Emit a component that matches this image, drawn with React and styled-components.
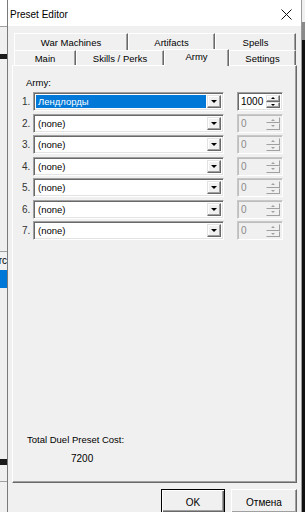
import React from 'react'
import styled, { createGlobalStyle } from 'styled-components'

const Global = createGlobalStyle`
  html, body {
    margin: 0;
    padding: 0;
    overflow: hidden;
    background: #f0f0f0;
  }
  * {
    box-sizing: border-box;
  }
`

const Screen = styled.div`
  display: flex;
  width: 305px;
  height: 512px;
  overflow: hidden;
  font-family: 'Liberation Sans', Arial, sans-serif;
  font-size: 9.5px;
  color: #000;
`

const BackLeft = styled.div`
  width: 7px;
  flex: none;
  display: flex;
  flex-direction: column;
  background: #f0f0f0;
  overflow: hidden;
`
const BackBand = styled.div`
  height: ${(p) => p.h}px;
  flex: none;
  background: ${(p) => p.bg || 'transparent'};
  border-bottom: ${(p) => (p.line ? '1px solid #a0a0a0' : 'none')};
  color: #000;
  font-size: 10px;
  line-height: ${(p) => p.h}px;
  white-space: nowrap;
  direction: rtl;
`
const BackRight = styled.div`
  width: 3px;
  flex: none;
  display: flex;
  flex-direction: column;
`
const RightBand = styled.div`
  height: ${(p) => p.h}px;
  flex: ${(p) => (p.grow ? 1 : 'none')};
  background: ${(p) => p.bg};
`

const Dialog = styled.div`
  width: 295px;
  flex: none;
  display: flex;
  flex-direction: column;
  border-left: 1px solid #7a7a7a;
  border-right: 1px solid #9a9a9a;
  background: #f0f0f0;
`
const TitleBar = styled.div`
  height: 26px;
  flex: none;
  display: flex;
  align-items: center;
  justify-content: space-between;
  background: #fff;
  padding: 2px 9px 0 2px;
  font-size: 10px;
`
const Body = styled.div`
  flex: 1;
  display: flex;
  flex-direction: column;
  padding: 7px 4px 0 4px;
`
const TabRow = styled.div`
  display: flex;
  height: ${(p) => p.h}px;
  padding-left: 2px;
  align-items: flex-end;
`
const Tab = styled.div`
  width: ${(p) => p.w}px;
  height: ${(p) => (p.active ? 17 : p.h)}px;
  flex: none;
  display: flex;
  align-items: center;
  justify-content: center;
  padding-bottom: ${(p) => (p.active ? 3 : 0)}px;
  background: #f0f0f0;
  border-top: 1px solid #fff;
  border-left: 1px solid #fff;
  border-right: 1px solid #696969;
  box-shadow: inset -1px 0 0 #a0a0a0;
  position: relative;
  z-index: ${(p) => (p.active ? 2 : 0)};
  margin-bottom: ${(p) => (p.active ? -1 : 0)}px;
`
const Panel = styled.div`
  height: 418px;
  flex: none;
  display: flex;
  flex-direction: column;
  border: 1px solid;
  border-color: #fff #696969 #696969 #fff;
  box-shadow: inset -1px -1px 0 #a0a0a0;
  padding: 10px 0 0 9px;
`
const SectionLabel = styled.div`
  height: 14px;
  line-height: 14px;
  margin: 0 0 2px 4px;
`
const Rows = styled.div`
  display: flex;
  flex-direction: column;
  gap: 2.5px;
`
const Row = styled.div`
  display: flex;
  align-items: center;
  height: 19px;
`
const Num = styled.div`
  width: 11px;
  flex: none;
  color: #333;
  font-size: 10px;
`
const Sunken = styled.div`
  display: flex;
  height: 19px;
  flex: none;
  border: 1px solid;
  border-color: #a0a0a0 #fff #fff #a0a0a0;
  box-shadow: inset 1px 1px 0 #696969, inset -1px -1px 0 #e3e3e3;
  background: #fff;
  padding: 2px;
`
const Combo = styled(Sunken)`
  width: 191px;
`
const ComboText = styled.div`
  flex: 1;
  padding-left: 2px;
  line-height: 13px;
  background: ${(p) => (p.selected ? '#0078d7' : 'transparent')};
  color: ${(p) => (p.selected ? '#fff' : '#000')};
  margin-right: 1px;
`
const Raised = styled.div`
  background: #f0f0f0;
  border: 1px solid;
  border-color: #e3e3e3 #696969 #696969 #e3e3e3;
  box-shadow: inset -1px -1px 0 #a0a0a0, inset 1px 1px 0 #fff;
  display: flex;
  align-items: center;
  justify-content: center;
`
const DropButton = styled(Raised)`
  width: 14px;
`
const Arrow = styled.div`
  width: 0;
  height: 0;
  border-left: ${(p) => p.s}px solid transparent;
  border-right: ${(p) => p.s}px solid transparent;
  ${(p) => (p.up ? 'border-bottom' : 'border-top')}: ${(p) => p.s}px solid
    ${(p) => (p.disabled ? '#a0a0a0' : '#000')};
`
const Spinner = styled(Sunken)`
  width: 46px;
  margin-left: 13px;
  border-color: ${(p) => (p.disabled ? '#c8c8c8 #fff #fff #c8c8c8' : '#a0a0a0 #fff #fff #a0a0a0')};
  box-shadow: ${(p) =>
    p.disabled ? 'inset 1px 1px 0 #bdbdbd' : 'inset 1px 1px 0 #696969, inset -1px -1px 0 #e3e3e3'};
  background: ${(p) => (p.disabled ? '#f0f0f0' : '#fff')};
`
const SpinText = styled.div`
  flex: 1;
  line-height: 13px;
  padding-left: 1px;
  color: ${(p) => (p.disabled ? '#8a8a8a' : '#000')};
  font-size: 10px;
`
const SpinButtons = styled.div`
  width: 14px;
  display: flex;
  flex-direction: column;
`
const SpinHalf = styled(Raised)`
  flex: 1;
  ${(p) => (p.disabled ? 'border-color: #f0f0f0 #a0a0a0 #a0a0a0 #f0f0f0; box-shadow: none;' : '')}
`
const Spacer = styled.div`
  flex: 1;
`
const Total = styled.div`
  padding-left: 5px;
  line-height: 14px;
`
const TotalValue = styled.div`
  padding-left: 49px;
  margin-top: 5px;
  margin-bottom: 16px;
  line-height: 14px;
  font-size: 10px;
`
const Buttons = styled.div`
  display: flex;
  justify-content: flex-end;
  gap: 6px;
  padding-top: 6px;
  padding-right: 0;
`
const Button = styled.div`
  width: ${(p) => p.w}px;
  height: 24px;
  flex: none;
  display: flex;
  align-items: center;
  justify-content: center;
  padding-top: 2px;
  font-size: 10px;
  background: #f0f0f0;
  border: 1px solid;
  border-color: ${(p) => (p.primary ? '#000' : '#fff #696969 #696969 #fff')};
  box-shadow: ${(p) =>
    p.primary
      ? 'inset 1px 1px 0 #fff, inset -1px -1px 0 #696969, inset -2px -2px 0 #a0a0a0'
      : 'inset -1px -1px 0 #a0a0a0'};
`

const army = [
  { name: 'Лендлорды', count: '1000' },
  { name: '(none)', count: '0' },
  { name: '(none)', count: '0' },
  { name: '(none)', count: '0' },
  { name: '(none)', count: '0' },
  { name: '(none)', count: '0' },
  { name: '(none)', count: '0' },
]

const CloseIcon = () => (
  <svg width="11" height="11" viewBox="0 0 11 11">
    <path d="M0.5 0.5 L10.5 10.5 M10.5 0.5 L0.5 10.5" stroke="#111" strokeWidth="1" fill="none" />
  </svg>
)

export default function App() {
  return (
    <Screen>
      <Global />
      <BackLeft>
        <BackBand h={27} bg="#fff" line />
        <BackBand h={27} bg="#f0f0f0" />
        <BackBand h={5} bg="#1a1a1a" />
        <BackBand h={193} bg="#f0f0f0" line />
        <BackBand h={18}>rc</BackBand>
        <BackBand h={18} bg="#0078d7" />
        <BackBand h={171} bg="#f0f0f0" />
        <BackBand h={6} bg="#1a1a1a" />
        <BackBand h={17} bg="#f0f0f0" line />
        <BackBand h={30} bg="#f0f0f0" />
      </BackLeft>
      <Dialog>
        <TitleBar>
          <span>Preset Editor</span>
          <CloseIcon />
        </TitleBar>
        <Body>
          <TabRow h={17}>
            <Tab w={114} h={17}>War Machines</Tab>
            <Tab w={87} h={17}>Artifacts</Tab>
            <Tab w={81} h={17}>Spells</Tab>
          </TabRow>
          <TabRow h={15}>
            <Tab w={62} h={15}>Main</Tab>
            <Tab w={88} h={15}>Skills / Perks</Tab>
            <Tab w={65} h={15} active>
              Army
            </Tab>
            <Tab w={67} h={15}>Settings</Tab>
          </TabRow>
          <Panel>
            <SectionLabel>Army:</SectionLabel>
            <Rows>
              {army.map((a, i) => (
                <Row key={i}>
                  <Num>{i + 1}.</Num>
                  <Combo>
                    <ComboText selected={i === 0}>{a.name}</ComboText>
                    <DropButton>
                      <Arrow s={3.5} />
                    </DropButton>
                  </Combo>
                  <Spinner disabled={i !== 0}>
                    <SpinText disabled={i !== 0}>{a.count}</SpinText>
                    <SpinButtons>
                      <SpinHalf disabled={i !== 0}>
                        <Arrow s={2} up disabled={i !== 0} />
                      </SpinHalf>
                      <SpinHalf disabled={i !== 0}>
                        <Arrow s={2} disabled={i !== 0} />
                      </SpinHalf>
                    </SpinButtons>
                  </Spinner>
                </Row>
              ))}
            </Rows>
            <Spacer />
            <Total>Total Duel Preset Cost:</Total>
            <TotalValue>7200</TotalValue>
          </Panel>
          <Buttons>
            <Button w={64} primary>
              OK
            </Button>
            <Button w={66}>Отмена</Button>
          </Buttons>
        </Body>
      </Dialog>
      <BackRight>
        <RightBand h={22} bg="#f0f0f0" />
        <RightBand h={18} bg="#8a8a8a" />
        <RightBand grow bg="#111" />
      </BackRight>
    </Screen>
  )
}
